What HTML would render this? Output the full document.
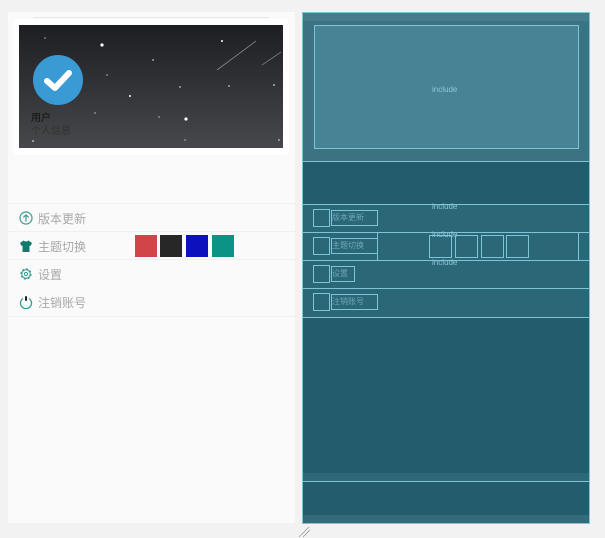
<!DOCTYPE html>
<html><head><meta charset="utf-8"><style>
*{margin:0;padding:0;box-sizing:border-box}
body{width:605px;height:538px;background:#f2f2f2;position:relative;overflow:hidden;font-family:"Liberation Sans","Noto Sans CJK SC",sans-serif}
.a{position:absolute}
.lbl{color:#a8a8a8;font-size:12px}
.inc{color:#8cc7d6;font-size:8px;position:absolute}
.rb{position:absolute;border:1px solid #7fc3d6}
</style></head><body>
<div class="a" style="left:8px;top:12px;width:287px;height:511px;background:#fafafa"></div>
<div class="a" style="left:33px;top:17px;width:236px;height:1px;background:#e6e6e6"></div>
<div class="a" style="left:13px;top:19px;width:276px;height:136px;background:#fff;border-radius:4px"></div>
<div class="a" style="left:19px;top:25px;width:264px;height:123px;background:linear-gradient(#1d1e21,#47484c);overflow:hidden">
<svg width="264" height="123" style="position:absolute;left:0;top:0">
<g fill="#fff">
<circle cx="83" cy="20" r="1.6"/><circle cx="203" cy="16" r="1"/><circle cx="167" cy="94" r="1.6"/><circle cx="111" cy="71" r="1"/><circle cx="134" cy="35" r="0.7"/><circle cx="161" cy="62" r="0.7"/><circle cx="255" cy="60" r="0.8"/><circle cx="210" cy="61" r="0.7"/><circle cx="14" cy="116" r="0.8"/><circle cx="88" cy="50" r="0.6"/><circle cx="270" cy="10" r="0.6"/><circle cx="26" cy="13" r="0.6"/><circle cx="260" cy="115" r="0.7"/><circle cx="166" cy="115" r="0.6"/><circle cx="76" cy="88" r="0.6"/><circle cx="140" cy="92" r="0.6"/></g>
<line x1="198" y1="45" x2="237" y2="16" stroke="#888" stroke-width="0.8"/>
<line x1="243" y1="40" x2="262" y2="27" stroke="#777" stroke-width="0.8"/>
</svg>
<div class="a" style="left:14px;top:30px;width:50px;height:50px;border-radius:50%;background:#3a9ad3"></div>
<svg class="a" style="left:14px;top:30px" width="50" height="50"><path d="M14 26 L22 33 L36 18" stroke="#fff" stroke-width="6" fill="none" stroke-linecap="round" stroke-linejoin="round"/></svg>
<div class="a" style="left:12px;top:88px;font-size:10px;color:#111;line-height:12px">用户</div>
<div class="a" style="left:12px;top:101px;font-size:10px;color:#333;line-height:12px">个人信息</div>
</div>
<div class="a" style="left:8px;top:203px;width:287px;height:1px;background:#f0f0f0"></div>
<div class="a" style="left:8px;top:231px;width:287px;height:1px;background:#f0f0f0"></div>
<div class="a" style="left:8px;top:259px;width:287px;height:1px;background:#f0f0f0"></div>
<div class="a" style="left:8px;top:316px;width:287px;height:1px;background:#f0f0f0"></div>
<svg class="a" style="left:19px;top:211px" width="14" height="14"><circle cx="7" cy="7" r="6" fill="none" stroke="#3a9a8e" stroke-width="1.2"/><path d="M7 10.5V4M4.3 6.5L7 3.8 9.7 6.5" stroke="#3a9a8e" stroke-width="1.2" fill="none"/></svg>
<div class="a lbl" style="left:38px;top:210px">版本更新</div>
<svg class="a" style="left:19px;top:239px" width="14" height="14"><path d="M4.5 1.5L1 4 2.5 7 3.5 6.5V13H10.5V6.5L11.5 7 13 4 9.5 1.5Q7 3.5 4.5 1.5Z" fill="#117a6e"/></svg>
<div class="a lbl" style="left:38px;top:238px">主题切换</div>
<div class="a" style="left:135px;top:235px;width:22px;height:22px;background:#d1444a"></div>
<div class="a" style="left:160px;top:235px;width:22px;height:22px;background:#272727"></div>
<div class="a" style="left:186px;top:235px;width:22px;height:22px;background:#0c10bd"></div>
<div class="a" style="left:212px;top:235px;width:22px;height:22px;background:#0b9485"></div>
<svg class="a" style="left:19px;top:267px" width="14" height="14"><circle cx="7" cy="7" r="5" fill="none" stroke="#3a9a8e" stroke-width="1.2" stroke-dasharray="2.2 1.7"/><circle cx="7" cy="7" r="4.2" fill="none" stroke="#3a9a8e" stroke-width="1"/><circle cx="7" cy="7" r="1.6" fill="none" stroke="#3a9a8e" stroke-width="1"/></svg>
<div class="a lbl" style="left:38px;top:266px">设置</div>
<svg class="a" style="left:19px;top:295px" width="14" height="14"><path d="M4 3.5A5.5 5.5 0 1 0 10 3.5" fill="none" stroke="#3a9a8e" stroke-width="1.3"/><rect x="6" y="1" width="2" height="5" rx="1" fill="#222"/></svg>
<div class="a lbl" style="left:38px;top:294px">注销账号</div>
<div class="a" style="left:302px;top:12px;width:288px;height:512px;background:#235c6c;border:1px solid #7fc3d6"></div>
<div class="a" style="left:303px;top:13px;width:286px;height:149px;background:#3c7282"></div>
<div class="a" style="left:303px;top:13px;width:286px;height:8px;background:#467c8c"></div>
<div class="rb" style="left:314px;top:25px;width:265px;height:124px;background:#468395"></div>
<div class="inc" style="left:432px;top:85px">include</div>
<div class="a" style="left:303px;top:161px;width:286px;height:1px;background:#7fc3d6"></div>
<div class="a" style="left:303px;top:204px;width:286px;height:113px;background:#2a6777"></div>
<div class="a" style="left:303px;top:204px;width:286px;height:1px;background:#7fc3d6"></div>
<div class="a" style="left:303px;top:232px;width:286px;height:1px;background:#7fc3d6"></div>
<div class="a" style="left:303px;top:260px;width:286px;height:1px;background:#7fc3d6"></div>
<div class="a" style="left:303px;top:288px;width:286px;height:1px;background:#7fc3d6"></div>
<div class="a" style="left:303px;top:317px;width:286px;height:1px;background:#7fc3d6"></div>
<div class="inc" style="left:432px;top:202px">include</div>
<div class="inc" style="left:432px;top:230px">include</div>
<div class="inc" style="left:432px;top:258px">include</div>
<div class="rb" style="left:313px;top:209px;width:17px;height:18px"></div>
<div class="rb" style="left:331px;top:210px;width:47px;height:16px;color:#6fa7b4;font-size:8px;line-height:14px">版本更新</div>
<div class="rb" style="left:313px;top:237px;width:17px;height:18px"></div>
<div class="rb" style="left:331px;top:238px;width:47px;height:16px;color:#6fa7b4;font-size:8px;line-height:14px">主题切换</div>
<div class="rb" style="left:313px;top:265px;width:17px;height:18px"></div>
<div class="rb" style="left:331px;top:266px;width:24px;height:16px;color:#6fa7b4;font-size:8px;line-height:14px">设置</div>
<div class="rb" style="left:313px;top:293px;width:17px;height:18px"></div>
<div class="rb" style="left:331px;top:294px;width:47px;height:16px;color:#6fa7b4;font-size:8px;line-height:14px">注销账号</div>
<div class="a" style="left:377px;top:233px;width:1px;height:27px;background:#7fc3d6"></div>
<div class="a" style="left:578px;top:233px;width:1px;height:27px;background:#7fc3d6"></div>
<div class="rb" style="left:429px;top:235px;width:23px;height:23px"></div>
<div class="rb" style="left:455px;top:235px;width:23px;height:23px"></div>
<div class="rb" style="left:481px;top:235px;width:23px;height:23px"></div>
<div class="rb" style="left:506px;top:235px;width:23px;height:23px"></div>
<div class="a" style="left:303px;top:473px;width:286px;height:8px;background:#2f6878"></div>
<div class="a" style="left:303px;top:481px;width:286px;height:1px;background:#7fc3d6"></div>
<div class="a" style="left:303px;top:515px;width:286px;height:8px;background:#336b7b"></div>
<svg class="a" style="left:298px;top:526px" width="14" height="12"><path d="M1 11L11 1M5 11L12 4" stroke="#999" stroke-width="0.8"/></svg>
</body></html>
